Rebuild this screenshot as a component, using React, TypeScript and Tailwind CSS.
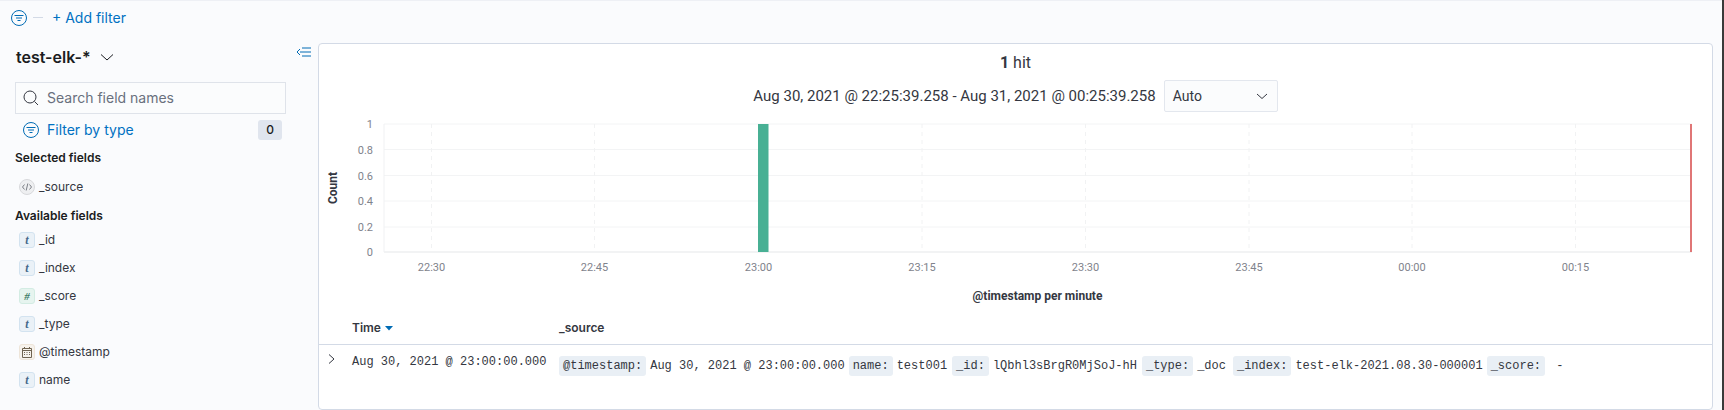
import { ReactNode } from "react";

const yTicks = [
  { label: "1", y: 124 },
  { label: "0.8", y: 149.5 },
  { label: "0.6", y: 175.5 },
  { label: "0.4", y: 201 },
  { label: "0.2", y: 227 },
  { label: "0", y: 252 },
];

const xTicks = [
  { label: "22:30", x: 431.5 },
  { label: "22:45", x: 594.5 },
  { label: "23:00", x: 758.5 },
  { label: "23:15", x: 922 },
  { label: "23:30", x: 1085.5 },
  { label: "23:45", x: 1249 },
  { label: "00:00", x: 1412 },
  { label: "00:15", x: 1575.5 },
];

const fields = [
  { name: "_id", type: "t" },
  { name: "_index", type: "t" },
  { name: "_score", type: "#" },
  { name: "_type", type: "t" },
  { name: "@timestamp", type: "date" },
  { name: "name", type: "t" },
];

const sourcePairs = [
  { key: "@timestamp:", value: "Aug 30, 2021 @ 23:00:00.000", gap: "mr-[4px]" },
  { key: "name:", value: "test001", gap: "mr-[5px]" },
  { key: "_id:", value: "lQbhl3sBrgR0MjSoJ-hH", gap: "mr-[5px]" },
  { key: "_type:", value: "_doc", gap: "mr-[7px]" },
  { key: "_index:", value: "test-elk-2021.08.30-000001", gap: "mr-[4px]" },
  { key: "_score:", value: " -", gap: "" },
];

function FilterIcon() {
  return (
    <svg width="16" height="16" viewBox="0 0 16 16" fill="none" stroke="#006bb4" strokeWidth="1">
      <circle cx="8" cy="8" r="7.5" />
      <path d="M3.5 5.5h9M5 8h6M6.5 10.5h3" />
    </svg>
  );
}

function FieldToken({ type }: { type: string }) {
  if (type === "source") {
    return (
      <span className="flex h-4 w-4 shrink-0 items-center justify-center rounded-full border border-[#d8d9dc] bg-[#eeeff1]">
        <svg width="12" height="12" viewBox="0 0 12 12" fill="none" stroke="#6d7078" strokeWidth="0.9">
          <path d="M3.5 3.5 1.5 6l2 2.5M8.5 3.5l2 2.5-2 2.5M6.8 2.5 5.2 9.5" />
        </svg>
      </span>
    );
  }
  if (type === "date") {
    return (
      <span className="flex h-4 w-4 shrink-0 items-center justify-center rounded-[3px] border border-[#eee5d9] bg-[#f6f2ec]">
        <svg width="12" height="12" viewBox="0 0 12 12" fill="none" stroke="#6f6350" strokeWidth="1">
          <path d="M1.5 2.5h9v9h-9zM1.5 4.5h9M3.5 1v2M8.5 1v2" />
          <path d="M3 6.5h1M5.5 6.5h1M8 6.5h1M3 8.5h1M5.5 8.5h1M8 8.5h1" />
        </svg>
      </span>
    );
  }
  const number = type === "#";
  return (
    <span
      className={
        number
          ? "flex h-4 w-4 shrink-0 items-center justify-center rounded-[3px] border border-[#d3ece3] bg-[#e6f4ef] font-['Liberation_Serif',serif] text-[11px] font-bold italic text-[#3f7d68]"
          : "flex h-4 w-4 shrink-0 items-center justify-center rounded-[3px] border border-[#d3e3f0] bg-[#eaf1f7] font-['Liberation_Serif',serif] text-[12px] font-bold italic text-[#45698a]"
      }
    >
      {type}
    </span>
  );
}

function FieldRow({ type, children }: { type: string; children: ReactNode }) {
  return (
    <div className="flex h-7 items-center gap-1 pl-[19px] text-xs text-[#343741]">
      <FieldToken type={type} />
      <span>{children}</span>
    </div>
  );
}

function Sidebar() {
  return (
    <aside className="relative w-[318px] shrink-0">
      <div className="flex h-[22px] items-center gap-[9px] pl-4 pt-[6px]">
        <span className="text-base font-semibold leading-5 text-[#1a1c21]">test-elk-*</span>
        <svg width="14" height="14" viewBox="0 0 14 14" fill="none" stroke="#1a1c21" strokeWidth="1">
          <path d="M1 4.5 7 10l6-5.5" />
        </svg>
      </div>

      <button className="absolute right-[7px] top-[2px]">
        <svg width="15" height="14" viewBox="0 0 15 14" fill="none" stroke="#006bb4" strokeWidth="1">
          <path d="M6 3h9M4 7h11M6 11h9" />
          <path d="M4 4 1 7l3 3" />
        </svg>
      </button>

      <div className="ml-[15px] mt-[17px] flex h-[32px] w-[271px] items-center gap-2 border border-[#dfe3ea] bg-[#fbfcfd] pl-[7px]">
        <svg width="16" height="16" viewBox="0 0 16 16" fill="none" stroke="#343741" strokeWidth="1">
          <circle cx="7" cy="7" r="6" />
          <path d="m11.5 11.5 3.5 3.5" />
        </svg>
        <span className="font-['Inter',sans-serif] text-sm text-[#69707d]">Search field names</span>
      </div>

      <div className="mt-[5px] flex h-[22px] items-center pl-[23px] pr-[36px]">
        <FilterIcon />
        <span className="ml-2 text-sm text-[#0071c2]">Filter by type</span>
        <span className="ml-auto flex h-5 w-6 items-center justify-center rounded-[3px] bg-[#e0e5ee] text-xs font-medium text-[#1a1c21]">
          0
        </span>
      </div>

      <div className="mt-[9px] pl-[15px] text-xs font-semibold leading-4 text-[#1a1c21]">Selected fields</div>
      <div className="mt-[7px]">
        <FieldRow type="source">_source</FieldRow>
      </div>

      <div className="mt-[7px] pl-[15px] text-xs font-semibold leading-4 text-[#1a1c21]">Available fields</div>
      <div className="mt-[2px]">
        {fields.map(f => (
          <FieldRow key={f.name} type={f.type}>
            {f.name}
          </FieldRow>
        ))}
      </div>
    </aside>
  );
}

function Histogram() {
  return (
    <svg className="block" width="1393" height="200" viewBox="319 112 1393 200" fontFamily="Roboto, sans-serif">
      <rect x="384" y="124" width="1308" height="128.5" fill="#ffffff" />
      {yTicks.map(t => (
        <line key={t.label} x1="384" x2="1692" y1={t.y} y2={t.y} stroke={t.y === 252 ? "#eeeff1" : "#f3f4f5"} strokeWidth={t.y === 252 ? 1.5 : 1} />
      ))}
      <line x1="384" x2="384" y1="124" y2="252" stroke="#f0f1f3" />
      {xTicks.map(t => (
        <line key={t.label} x1={t.x} x2={t.x} y1="124" y2="252" stroke="#f1f2f3" strokeDasharray="4 4" />
      ))}
      <rect x="758" y="124" width="10.5" height="128" fill="#48b094" />
      <rect x="1690" y="124" width="2" height="128" fill="#e07676" />
      {yTicks.map(t => (
        <text key={t.label} x="373" y={t.y + 4} textAnchor="end" fontSize="11" fill="#7f838c">
          {t.label}
        </text>
      ))}
      {xTicks.map(t => (
        <text key={t.label} x={t.x} y="271" textAnchor="middle" fontSize="11" fill="#7f838c">
          {t.label}
        </text>
      ))}
      <text transform="translate(337 188) rotate(-90)" textAnchor="middle" fontSize="12" fontWeight="700" fill="#343741">
        Count
      </text>
      <text x="1037.5" y="300" textAnchor="middle" fontSize="12" fontWeight="700" fill="#343741">
        @timestamp per minute
      </text>
    </svg>
  );
}

function ResultCard() {
  return (
    <section className="h-[367px] flex-1 rounded-[4px] border border-[#d3dae6] bg-white">
      <div className="flex h-[31px] items-end justify-center font-['Roboto',sans-serif] text-base leading-6 text-[#343741]">
        <span>
          <b>1</b> hit
        </span>
      </div>
      <div className="flex h-[37px] items-center justify-center gap-2 pt-[5px] font-['Roboto',sans-serif]">
        <span className="text-[15px] text-[#343741]">Aug 30, 2021 @ 22:25:39.258 - Aug 31, 2021 @ 00:25:39.258</span>
        <div className="flex h-8 w-[114px] items-center justify-between rounded-[2px] border border-[#e3e7ee] bg-[#fbfcfd] pl-2 pr-2 text-sm text-[#343741]">
          <span>Auto</span>
          <svg width="14" height="14" viewBox="0 0 14 14" fill="none" stroke="#343741" strokeWidth="1">
            <path d="M2 5l5 4.5L12 5" />
          </svg>
        </div>
      </div>
      <Histogram />
      <div className="grid h-[33px] grid-cols-[33px_207px_1fr] items-center border-b border-[#d3dae6] text-xs font-semibold text-[#343741]">
        <span />
        <span className="flex items-center gap-[4px]">
          Time
          <svg width="8" height="5" viewBox="0 0 8 5">
            <path d="M0 0h8L4 4.5z" fill="#006bb4" />
          </svg>
        </span>
        <span>_source</span>
      </div>
      <div className="grid grid-cols-[33px_207px_1fr] pt-[11px] font-['Liberation_Mono',monospace] text-xs text-[#343741]">
        <span className="-mt-[5px] flex h-4 items-center pl-[8px]">
          <svg width="10" height="12" viewBox="0 0 10 12" fill="none" stroke="#343741" strokeWidth="1">
            <path d="M2 1.5 7 6l-5 4.5" />
          </svg>
        </span>
        <span className="-mt-[2px] leading-4">Aug 30, 2021 @ 23:00:00.000</span>
        <div className="flex items-center whitespace-pre">
          {sourcePairs.map(p => (
            <span key={p.key} className={`flex items-center ${p.gap}`}>
              <span className="mr-[4px] rounded-[3px] bg-[#e9eff5] px-1 leading-[20px]">{p.key}</span>
              <span>{p.value}</span>
            </span>
          ))}
        </div>
      </div>
    </section>
  );
}

export default function App() {
  return (
    <div className="flex h-[410px] w-[1724px] overflow-hidden bg-[#fafbfd] font-['Inter',sans-serif]">
      <div className="min-w-0 flex-1">
        <div className="flex h-[36px] items-center border-t border-[#eef0f5] pb-[2px] pl-[11px]">
          <FilterIcon />
          <span className="ml-[6px] h-px w-[10px] bg-[#d3dae6]" />
          <span className="ml-[9px] text-sm text-[#0071c2]">+ Add filter</span>
        </div>
        <div className="mt-[7px] flex pr-[9px]">
          <Sidebar />
          <ResultCard />
        </div>
      </div>
      <div className="w-[2px] shrink-0 bg-[#3a3a3a]" />
    </div>
  );
}
